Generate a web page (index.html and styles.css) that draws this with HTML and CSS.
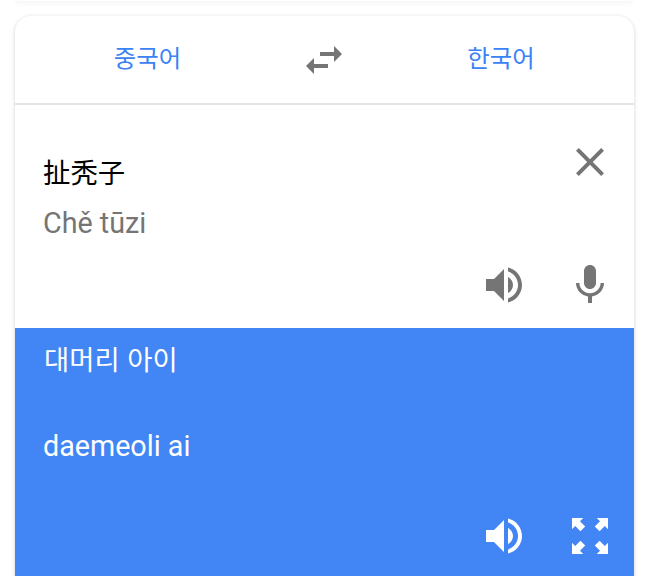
FILE: index.html
```html
<!DOCTYPE html>
<html lang="ko">
<head>
<meta charset="utf-8">
<title>번역</title>
<link rel="stylesheet" href="styles.css">
</head>
<body>
<div class="prev-card"></div>
<main class="card">
  <header class="langs">
    <div class="lang">중국어</div>
    <svg class="icon icon-grey" viewBox="0 0 24 24"><path d="M6.99 11L3 15l3.99 4v-3H14v-2H6.99v-3zM21 9l-3.99-4v3H10v2h7.01v3L21 9z"/></svg>
    <div class="lang">한국어</div>
  </header>
  <section class="source">
    <div class="source-top">
      <div class="source-text">
        <div class="query" lang="zh">扯秃子</div>
        <div class="translit">Chě tūzi</div>
      </div>
      <svg class="icon icon-grey" viewBox="0 0 24 24"><path d="M19 6.41L17.59 5 12 10.59 6.41 5 5 6.41 10.59 12 5 17.59 6.41 19 12 13.41 17.59 19 19 17.59 13.41 12z"/></svg>
    </div>
    <div class="actions">
      <svg class="icon icon-grey" viewBox="0 0 24 24"><path d="M3 9v6h4l5 5V4L7 9H3zm13.5 3c0-1.77-1.02-3.29-2.5-4.03v8.05c1.48-.73 2.5-2.25 2.5-4.02zM14 3.23v2.06c2.89.86 5 3.54 5 6.71s-2.11 5.85-5 6.71v2.06c4.01-.91 7-4.49 7-8.77s-2.99-7.86-7-8.77z"/></svg>
      <svg class="icon icon-grey" viewBox="0 0 24 24"><path d="M12 14c1.66 0 3-1.34 3-3V5c0-1.66-1.34-3-3-3S9 3.34 9 5v6c0 1.66 1.34 3 3 3zm5.3-3c0 3-2.54 5.1-5.3 5.1S6.7 14 6.7 11H5c0 3.41 2.72 6.23 6 6.72V21h2v-3.28c3.28-.48 6-3.3 6-6.72h-1.7z"/></svg>
    </div>
  </section>
  <section class="result">
    <div class="result-text">대머리 아이</div>
    <div class="result-translit">daemeoli ai</div>
    <div class="actions">
      <svg class="icon icon-white" viewBox="0 0 24 24"><path d="M3 9v6h4l5 5V4L7 9H3zm13.5 3c0-1.77-1.02-3.29-2.5-4.03v8.05c1.48-.73 2.5-2.25 2.5-4.02zM14 3.23v2.06c2.89.86 5 3.54 5 6.71s-2.11 5.85-5 6.71v2.06c4.01-.91 7-4.49 7-8.77s-2.99-7.86-7-8.77z"/></svg>
      <svg class="icon icon-white" viewBox="0 0 24 24"><path d="M3 3h5.600L7 4.600 9.600 7.200 7.200 9.600 4.600 7 3 8.600zM21 3v5.600L19.400 7l-2.600 2.600-2.400-2.400L17 4.600 15.400 3zM3 21v-5.600L4.600 17l2.600-2.600 2.400 2.400L7 19.400 8.600 21zM21 21h-5.600l1.600-1.600-2.600-2.600 2.400-2.400 2.600 2.600 1.600-1.600z"/></svg>
    </div>
  </section>
</main>
</body>
</html>
```
FILE: styles.css
```css
html, body {
  margin: 0;
  padding: 0;
  height: 576px;
  overflow: hidden;
  background: #fff;
  font-family: Roboto, "Noto Sans CJK KR", sans-serif;
}
.prev-card {
  height: 1px;
  margin: 0 15px;
  background: #fff;
  box-shadow: 0 1px 4px rgba(0, 0, 0, 0.16);
}
.card {
  margin: 15px 14px 0 15px;
  background: #fff;
  border-radius: 16px 16px 0 0;
  box-shadow: 0 1px 4px rgba(0, 0, 0, 0.18);
  overflow: hidden;
}
.langs {
  display: grid;
  grid-template-columns: 265px 1fr 266px;
  align-items: center;
  justify-items: center;
  height: 87px;
  border-bottom: 2px solid #e4e4e4;
}
.lang {
  font-family: "Noto Sans CJK KR", sans-serif;
  font-size: 24.4px;
  line-height: 78px;
  padding-bottom: 6px;
  color: #3b82f6;
}
.icon {
  display: block;
  width: 48px;
  height: 48px;
  flex: none;
}
.icon-grey { fill: #757575; }
.icon-white { fill: #fff; }
.source {
  height: 223px;
  display: flex;
  flex-direction: column;
  justify-content: space-between;
}
.source-top {
  display: flex;
  justify-content: space-between;
  padding: 33px 20px 0 28px;
}
.query {
  font-family: "Noto Sans CJK SC", sans-serif;
  font-size: 27.4px;
  line-height: 50px;
  margin-top: 8px;
  color: #000;
}
.translit {
  font-size: 28.7px;
  line-height: 50px;
  margin-top: 2px;
  color: #757575;
}
.actions {
  display: flex;
  justify-content: flex-end;
  gap: 38px;
  padding: 0 20px 19px 0;
}
.result {
  height: 260px;
  background: #4285f4;
  color: #fff;
  padding: 0 0 0 28px;
}
.result-text {
  font-family: "Noto Sans CJK KR", sans-serif;
  font-size: 27.4px;
  line-height: 60px;
  padding-left: 1px;
}
.result-translit {
  font-size: 28.7px;
  line-height: 50px;
  margin-top: 33px;
}
.result .actions {
  margin-top: 41px;
}
```
